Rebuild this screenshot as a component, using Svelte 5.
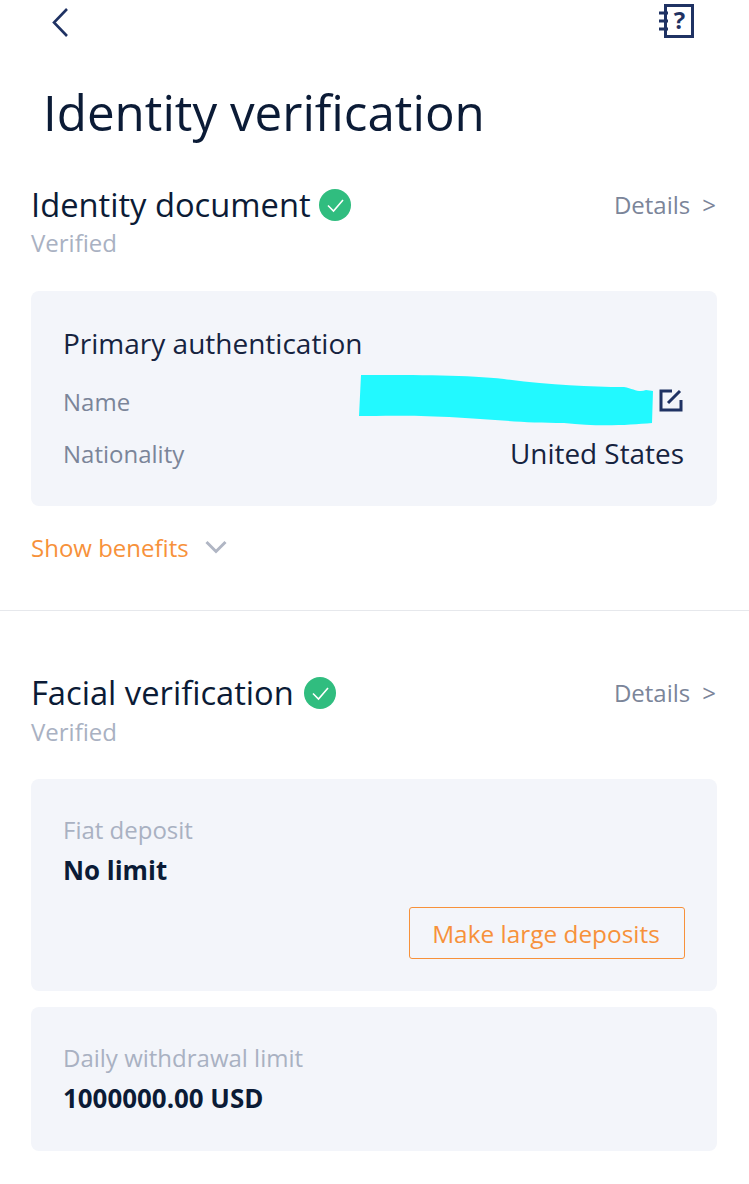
<script>
  const facial = [
    { label: 'Fiat deposit', value: 'No limit' },
  ];
</script>

<div class="page">
  <header class="top">
    <svg class="back" width="20" height="30" viewBox="0 0 20 30"><path d="M16 2 L3 15.500 L16 29" fill="none" stroke="#1f3263" stroke-width="2.600"/></svg>
    <svg class="help" width="38" height="40" viewBox="0 0 38 40">
      <rect x="7.500" y="2.500" width="27" height="31" fill="none" stroke="#1f3263" stroke-width="3"/>
      <path d="M1 10h9M1 18h9M1 26h9" stroke="#1f3263" stroke-width="3"/>
      <text x="21.500" y="26" text-anchor="middle" class="q">?</text>
    </svg>
  </header>

  <h1>Identity verification</h1>

  <section class="sec first">
    <div class="head">
      <div class="title-line">
        <h2>Identity document</h2>
        <svg class="ok" width="32" height="32" viewBox="0 0 32 32"><circle cx="16" cy="16" r="16" fill="#30bd7f"/><path d="M9 16.500l5.500 5.500L24 11" fill="none" stroke="#fff" stroke-width="1.600"/></svg>
      </div>
      <span class="details">Details<span class="gt">&gt;</span></span>
    </div>
    <p class="verified">Verified</p>

    <div class="card primary">
      <h3>Primary authentication</h3>
      <div class="row name">
        <span class="key">Name</span>
        <span class="val">
          <svg class="scribble" width="295" height="54" viewBox="0 0 295 54"><path d="M2 0 C60 0 110 0 145 4 C190 10 230 12 265 12 C275 14 280 18 287 15 L294 16 L293 48 C270 50 240 52 205 48 C160 48 130 44 90 42 C50 40 20 41 0 41 Z" fill="#22f9ff"/></svg>
          <svg class="edit" width="24" height="24" viewBox="0 0 24 24"><path d="M13 3H2v19h20V12" fill="none" stroke="#1f3263" stroke-width="3"/><path d="M9 15L21 3" fill="none" stroke="#1f3263" stroke-width="3"/></svg>
        </span>
      </div>
      <div class="row nat">
        <span class="key">Nationality</span>
        <span class="country">United States</span>
      </div>
    </div>

    <div class="benefits">
      <span>Show benefits</span>
      <svg width="22" height="14" viewBox="0 0 22 14"><path d="M1.500 2L11 11.500L20.500 2" fill="none" stroke="#b0b6c4" stroke-width="3"/></svg>
    </div>
  </section>

  <hr />

  <section class="sec second">
    <div class="head">
      <div class="title-line">
        <h2>Facial verification</h2>
        <svg class="ok" width="32" height="32" viewBox="0 0 32 32"><circle cx="16" cy="16" r="16" fill="#30bd7f"/><path d="M9 16.500l5.500 5.500L24 11" fill="none" stroke="#fff" stroke-width="1.600"/></svg>
      </div>
      <span class="details">Details<span class="gt">&gt;</span></span>
    </div>
    <p class="verified">Verified</p>

    <div class="card deposit">
      {#each facial as f}
        <p class="small">{f.label}</p>
        <p class="big">{f.value}</p>
      {/each}
      <div class="actions"><span class="btn">Make large deposits</span></div>
    </div>

    <div class="card withdraw">
      <p class="small">Daily withdrawal limit</p>
      <p class="big">1000000.00 USD</p>
    </div>
  </section>
</div>

<style>
  :global(body) {
    margin: 0;
    background: #fff;
  }
  .page {
    width: 749px;
    height: 1184px;
    overflow: hidden;
    box-sizing: border-box;
    font-family: "Open Sans", "Noto Sans", sans-serif;
    color: #0b1b36;
  }
  p, h1, h2, h3 { margin: 0; font-weight: 400; }
  .top {
    display: flex;
    justify-content: space-between;
    align-items: flex-start;
    padding: 3px 53px 0 51px;
    height: 84px;
    box-sizing: border-box;
  }
  .back { margin-top: 4px; }
  .q { font: 700 24px "Open Sans", sans-serif; fill: #1f3263; }
  h1 {
    font-size: 49.300px;
    line-height: 56px;
    padding-left: 43px;
  }
  .sec { padding: 0 32px 0 31px; }
  .first { margin-top: 45px; }
  .head {
    display: flex;
    justify-content: space-between;
    align-items: center;
    height: 40px;
  }
  .title-line { display: flex; align-items: center; gap: 8px; }
  .second .title-line { gap: 10px; }
  h2 { font-size: 32.700px; line-height: 40px; }
  .details { font-size: 24px; color: #7b8599; margin: 0 1px 2px 0; }
  .gt { margin-left: 12px; }
  .verified { font-size: 24px; line-height: 36px; color: #a9b1c2; }
  .second .verified { margin-top: 1px; }
  .card {
    background: #f3f5fa;
    border-radius: 8px;
    padding: 0 32px;
    box-sizing: border-box;
  }
  .primary { margin-top: 30px; height: 215px; padding-top: 32px; }
  h3 { font-size: 28px; line-height: 40px; color: #16233f; }
  .row { display: flex; justify-content: space-between; align-items: center; }
  .name { margin-top: 16px; height: 44px; }
  .nat { margin-top: 8px; height: 44px; }
  .key { font-size: 24px; color: #7b8599; }
  .val { display: flex; align-items: center; position: relative; padding-right: 2px; }
  .scribble { position: absolute; right: 31px; top: -15px; }
  .edit { display: block; margin-top: -2px; }
  .country { font-size: 27.900px; color: #16233f; margin-right: 1px; }
  .benefits {
    display: flex;
    align-items: center;
    gap: 16px;
    margin-top: 22px;
    height: 38px;
    font-size: 24px;
    color: #f7913a;
  }
  hr {
    border: 0;
    border-top: 1px solid #e6e8ec;
    margin: 44px 0 0;
  }
  hr + .sec { margin-top: 62px; }
  .deposit { margin-top: 29px; height: 212px; padding-top: 34px; }
  .withdraw { margin-top: 16px; height: 144px; padding-top: 34px; }
  .small { font-size: 24px; line-height: 34px; color: #a9b1c2; }
  .big { font-size: 25.900px; line-height: 38px; font-weight: 700; color: #0b1b36; margin-top: 4px; }
  .actions { display: flex; justify-content: flex-end; margin-top: 18px; }
  .btn {
    display: flex;
    align-items: center;
    justify-content: center;
    width: 276px;
    height: 52px;
    box-sizing: border-box;
    border: 1px solid #f7913a;
    border-radius: 3px;
    font-size: 24.400px;
    color: #f7913a;
    padding-right: 2px;
  }
</style>
